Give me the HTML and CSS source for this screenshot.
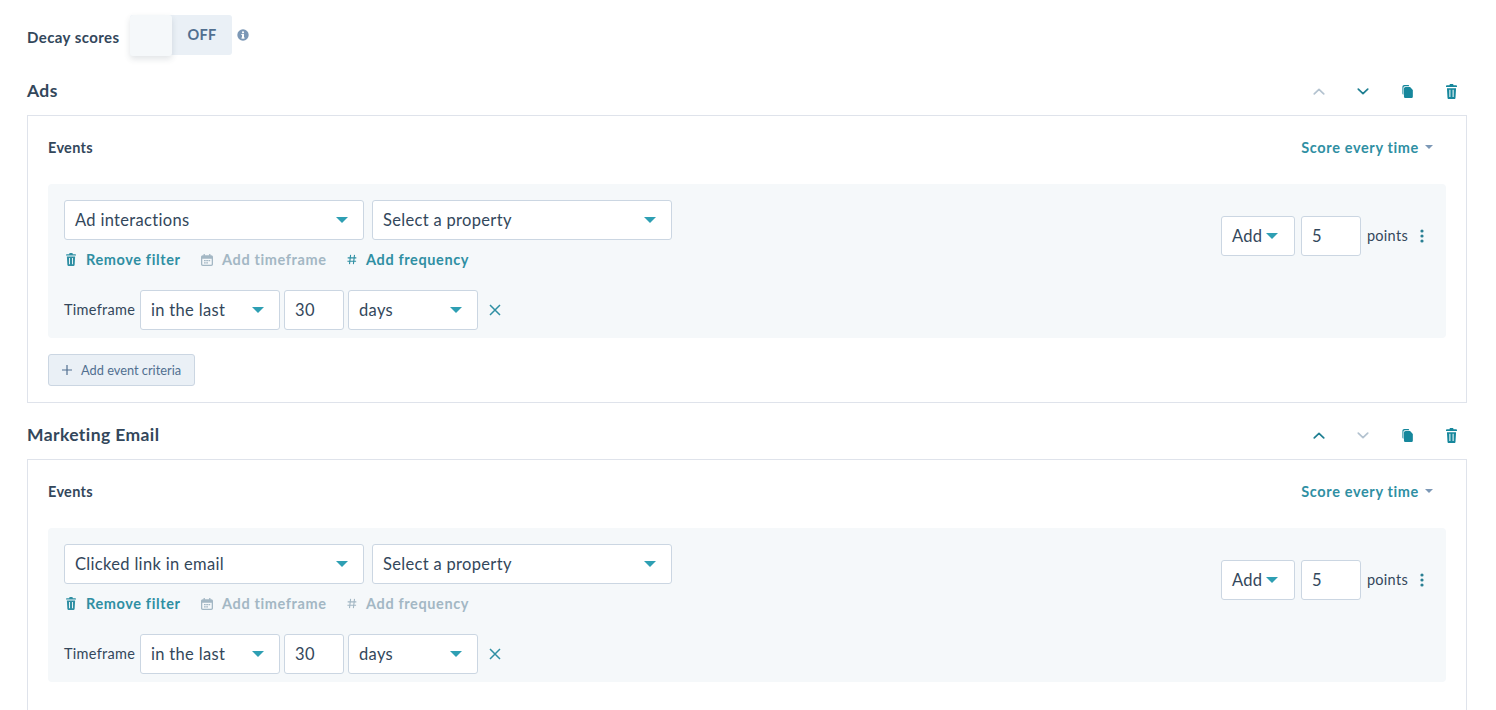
FILE: index.html
```html
<!DOCTYPE html>
<html lang="en">
<head>
<meta charset="utf-8">
<title>Score settings</title>
<link rel="stylesheet" href="styles.css">
</head>
<body>
<svg class="defs" width="0" height="0" aria-hidden="true">
  <symbol id="i-trash" viewBox="0 0 14 16" preserveAspectRatio="none"><path fill="currentColor" fill-rule="evenodd" d="M5 0h4l.6 1.4H13c.6 0 1 .4 1 1v.8H0v-.8c0-.6.4-1 1-1h3.400zM1.200 4.400h11.600l-.7 10.200c0 .8-.6 1.400-1.400 1.400H3.300c-.8 0-1.300-.6-1.400-1.400zM4.300 6.200v7.600h1.300V6.200zm4.100 0v7.600h1.300V6.200z"/></symbol>
  <symbol id="i-copy" viewBox="0 0 14 16" preserveAspectRatio="none"><path fill="currentColor" d="M.5 2.500C.5 1.100 1.500 0 2.900 0h5.600l.8 1.500H3.500C2.400 1.500 1.800 2.400 1.800 3.500V12C1 11.800.5 11.200.5 10.500z"/><path fill="currentColor" d="M4.500 2.500h5.800L13.800 6v8c0 1.100-.9 2-2 2H4.500c-1.100 0-2-.9-2-2V4.500c0-1.100.9-2 2-2z"/></symbol>
  <symbol id="i-cal" viewBox="0 0 14 14"><path fill="currentColor" fill-rule="evenodd" d="M3 0h1.500v1.500h5V0H11v1.500h1c1.100 0 2 .9 2 2V12c0 1.100-.9 2-2 2H2c-1.100 0-2-.9-2-2V3.500c0-1.100.9-2 2-2h1zM1.500 5.500V12c0 .3.200.5.500.5h10c.3 0 .5-.2.500-.5V5.500zM3.500 7h2v1.500h-2zm2.600 0h2v1.500h-2zm2.600 0h2v1.500h-2zM3.500 9.500h2V11h-2zm2.600 0h2V11h-2z"/></symbol>
  <symbol id="i-hash" viewBox="0 0 12 12"><path fill="none" stroke="currentColor" stroke-width="1.300" d="M4.300.5 3 11.500M9 .5 7.700 11.500M.8 4h10.400M.5 8h10.400"/></symbol>
  <symbol id="i-up" viewBox="0 0 14 8"><path fill="none" stroke="currentColor" stroke-width="2" stroke-linecap="round" stroke-linejoin="round" d="M1.500 6.800 7 1.500l5.500 5.300"/></symbol>
  <symbol id="i-down" viewBox="0 0 14 8"><path fill="none" stroke="currentColor" stroke-width="2" stroke-linecap="round" stroke-linejoin="round" d="M1.500 1.200 7 6.500l5.500-5.300"/></symbol>
</svg>

<main class="page">
  <div class="decay">
    <span class="decay-label">Decay scores</span>
    <div class="toggle"><span class="knob"></span><span class="toggle-text">OFF</span></div>
    <svg class="info" width="12" height="12" viewBox="0 0 12 12"><circle cx="6" cy="6" r="5.700" fill="#7c98b6"/><rect x="5" y="5" width="2" height="4.400" fill="#fff"/><rect x="4.300" y="8.500" width="3.400" height="1" fill="#fff"/><rect x="4.300" y="5" width="2" height="1" fill="#fff"/><circle cx="6" cy="3.300" r="1.100" fill="#fff"/></svg>
  </div>

  <section class="group">
    <header class="group-head">
      <h2>Ads</h2>
      <div class="actions">
        <svg class="act act-up off"><use href="#i-up"/></svg>
        <svg class="act act-down"><use href="#i-down"/></svg>
        <svg class="act-copy"><use href="#i-copy"/></svg>
        <svg class="act-trash"><use href="#i-trash"/></svg>
      </div>
    </header>
    <div class="box">
      <div class="box-head">
        <span class="events">Events</span>
        <span class="score">Score every time<i class="mini-caret"></i></span>
      </div>
      <div class="panel">
        <div class="criteria">
          <div class="row">
            <div class="select wide"><span>Ad interactions</span><i class="caret"></i></div>
            <div class="select wide"><span>Select a property</span><i class="caret"></i></div>
          </div>
          <div class="links">
            <a class="link link-remove"><svg class="li-trash"><use href="#i-trash"/></svg>Remove filter</a>
            <a class="link link-time disabled"><svg class="li-cal"><use href="#i-cal"/></svg>Add timeframe</a>
            <a class="link link-freq"><svg class="li-hash"><use href="#i-hash"/></svg>Add frequency</a>
          </div>
          <div class="row time-row">
            <span class="time-label">Timeframe</span>
            <div class="select s-last"><span>in the last</span><i class="caret"></i></div>
            <div class="input s-num">30</div>
            <div class="select s-days"><span>days</span><i class="caret"></i></div>
            <svg class="close" width="12" height="12" viewBox="0 0 12 12"><path fill="none" stroke="currentColor" stroke-width="1.500" d="M1 1l10 10M11 1 1 11"/></svg>
          </div>
        </div>
        <div class="points">
          <div class="select s-add"><span>Add</span><i class="caret"></i></div>
          <div class="input s-pts">5</div>
          <span class="pts-label">points</span>
          <svg class="kebab" width="4" height="14" viewBox="0 0 4 14"><circle cx="2" cy="2" r="1.600"/><circle cx="2" cy="7" r="1.600"/><circle cx="2" cy="12" r="1.600"/></svg>
        </div>
      </div>
      <button class="add-btn"><svg width="10" height="10" viewBox="0 0 10 10"><path fill="none" stroke="currentColor" stroke-width="1.200" d="M5 0v10M0 5h10"/></svg>Add event criteria</button>
    </div>
  </section>

  <section class="group">
    <header class="group-head">
      <h2>Marketing Email</h2>
      <div class="actions">
        <svg class="act act-up"><use href="#i-up"/></svg>
        <svg class="act act-down off"><use href="#i-down"/></svg>
        <svg class="act-copy"><use href="#i-copy"/></svg>
        <svg class="act-trash"><use href="#i-trash"/></svg>
      </div>
    </header>
    <div class="box box-open">
      <div class="box-head">
        <span class="events">Events</span>
        <span class="score">Score every time<i class="mini-caret"></i></span>
      </div>
      <div class="panel">
        <div class="criteria">
          <div class="row">
            <div class="select wide"><span>Clicked link in email</span><i class="caret"></i></div>
            <div class="select wide"><span>Select a property</span><i class="caret"></i></div>
          </div>
          <div class="links">
            <a class="link link-remove"><svg class="li-trash"><use href="#i-trash"/></svg>Remove filter</a>
            <a class="link link-time disabled"><svg class="li-cal"><use href="#i-cal"/></svg>Add timeframe</a>
            <a class="link link-freq disabled"><svg class="li-hash"><use href="#i-hash"/></svg>Add frequency</a>
          </div>
          <div class="row time-row">
            <span class="time-label">Timeframe</span>
            <div class="select s-last"><span>in the last</span><i class="caret"></i></div>
            <div class="input s-num">30</div>
            <div class="select s-days"><span>days</span><i class="caret"></i></div>
            <svg class="close" width="12" height="12" viewBox="0 0 12 12"><path fill="none" stroke="currentColor" stroke-width="1.500" d="M1 1l10 10M11 1 1 11"/></svg>
          </div>
        </div>
        <div class="points">
          <div class="select s-add"><span>Add</span><i class="caret"></i></div>
          <div class="input s-pts">5</div>
          <span class="pts-label">points</span>
          <svg class="kebab" width="4" height="14" viewBox="0 0 4 14"><circle cx="2" cy="2" r="1.600"/><circle cx="2" cy="7" r="1.600"/><circle cx="2" cy="12" r="1.600"/></svg>
        </div>
      </div>
    </div>
  </section>
</main>
</body>
</html>
```
FILE: styles.css
```css
* { box-sizing: border-box; }
html, body { margin: 0; height: 710px; overflow: hidden; background: #fff; }
body { font-family: Lato, "Open Sans", sans-serif; color: #33475b; }
.defs { position: absolute; }

.page { padding: 14px 29px 0 27px; width: 1496px; height: 710px; overflow: hidden; }

.decay { display: flex; align-items: flex-start; height: 45px; }
.decay-label { font-size: 15px; font-weight: 700; margin-top: 14px; width: 103px; letter-spacing: .42px; }
.toggle { display: flex; width: 102px; height: 40px; margin-top: 1px; background: #eaf0f6; border-radius: 3px; }
.knob { width: 42px; height: 41px; background: #f5f8fa; border-radius: 3px; box-shadow: 0 3px 6px rgba(45, 62, 80, .14); }
.toggle-text { flex: 1; text-align: center; font-size: 14.5px; font-weight: 700; color: #516f90; line-height: 40px; letter-spacing: .3px; }
.info { margin: 15px 0 0 5px; }

.group-head { display: flex; justify-content: space-between; align-items: center; height: 56px; padding-top: 8px; }
.group-head h2 { margin: 0; font-size: 17.5px; font-weight: 700; line-height: 24px; letter-spacing: .4px; }
.actions { display: flex; align-items: center; padding: 1px 10px 0 0; }
.act { width: 12px; height: 7px; color: #1f7f92; }
.act.off { color: #b4c3d0; }
.act-down { margin-left: 32px; }
.act-copy { width: 11px; height: 13px; color: #16879c; margin-left: 33px; }
.act-trash { width: 11px; height: 15px; color: #16879c; margin-left: 33px; }

.box { border: 1px solid #dfe3eb; padding: 20px 20px 16px; height: 288px; }
.box-open { height: 400px; }
.box-head { display: flex; justify-content: space-between; align-items: center; height: 24px; padding: 0 13px 2px 0; }
.events { font-size: 14.5px; font-weight: 700; letter-spacing: .3px; }
.score { font-size: 14.5px; font-weight: 700; color: #2f8fa3; display: flex; align-items: center; letter-spacing: .64px; }
.mini-caret { width: 0; height: 0; border: 4px solid transparent; border-top-color: #7c98b6; border-bottom: 0; margin-left: 6px; }

.panel { display: flex; justify-content: space-between; align-items: flex-start; background: #f5f8fa; border-radius: 4px; margin-top: 24px; padding: 16px 22px 8px 16px; height: 154px; }
.criteria { display: flex; flex-direction: column; }
.row { display: flex; gap: 8px; align-items: center; }

.select, .input { height: 40px; background: #fff; border: 1px solid #cbd6e2; border-radius: 3px; font-size: 16.5px; letter-spacing: .32px; display: flex; align-items: center; }
.select { justify-content: space-between; padding: 0 15.500px 0 10px; }
.input { padding-left: 10px; }
.caret { width: 0; height: 0; border: 6.500px solid transparent; border-top: 6px solid #2e9fb3; border-bottom: 0; flex: none; }
.wide { width: 300px; }

.links { display: flex; height: 50px; align-items: center; padding: 0 0 11px 2px; }
.link { display: flex; align-items: center; font-size: 14.5px; font-weight: 700; color: #2f8fa3; letter-spacing: .62px; }
.link.disabled { color: #a3b7c4; }
.link-remove { width: 135px; }
.link-time { width: 146px; }
.li-trash { width: 10px; height: 13px; margin-right: 10px; }
.li-cal { width: 12px; height: 12px; margin-right: 9px; }
.li-hash { width: 10px; height: 11px; margin-right: 9px; }

.time-row { gap: 4px; }
.time-label { font-size: 14.5px; width: 72px; letter-spacing: .3px; padding-bottom: 1px; }
.s-last { width: 140px; }
.s-num { width: 60px; }
.s-days { width: 130px; }
.close { color: #2f8fa3; margin-left: 7px; }

.points { display: flex; align-items: center; margin-top: 16px; }
.s-add { width: 74px; padding: 0 15.500px 0 10px; }
.s-pts { width: 60px; margin-left: 6px; }
.pts-label { font-size: 14.5px; margin-left: 6px; letter-spacing: .3px; padding-bottom: 1px; }
.kebab { fill: #2a7f93; margin-left: 12px; }

.add-btn { display: flex; align-items: center; width: 147px; height: 32px; margin-top: 16px; padding: 0 0 0 13px; background: #eaf0f6; border: 1px solid #cbd6e2; border-radius: 3px; font-family: inherit; font-size: 12.8px; color: #516f90; }
.add-btn svg { margin-right: 9px; }
```
